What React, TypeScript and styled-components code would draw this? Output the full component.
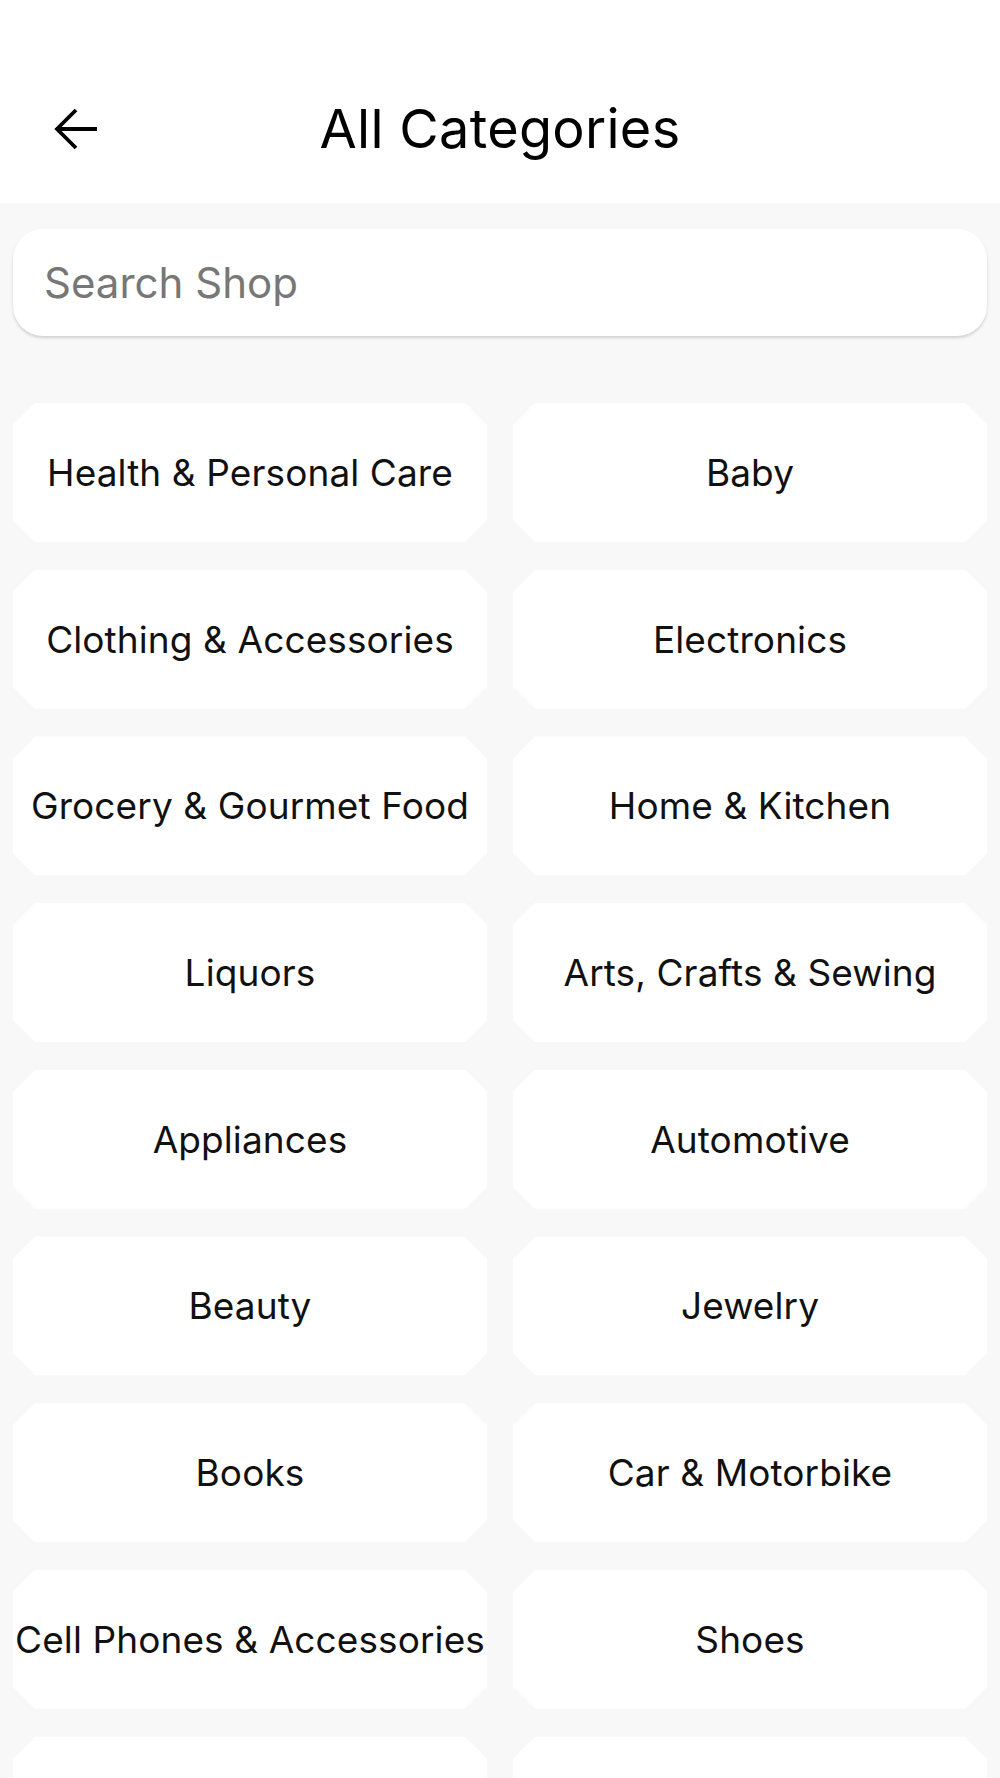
import React from "react";
import styled, { createGlobalStyle } from "styled-components";

const GlobalStyle = createGlobalStyle`
    * {
        box-sizing: border-box;
    }
    body {
        margin: 0;
        background-color: #f8f8f8;
        font-family: Inter, "Noto Sans", "Liberation Sans", sans-serif;
        color: #111;
    }
`;

const Page = styled.div`
    display: flex;
    flex-direction: column;
    height: 1778px;
    overflow: hidden;
    background-color: #f8f8f8;
`;

const Header = styled.header`
    display: grid;
    grid-template-columns: 1fr auto 1fr;
    align-items: center;
    height: 203px;
    flex-shrink: 0;
    padding: 54px 0 0 54px;
    background-color: #fff;
`;

const BackButton = styled.button`
    display: flex;
    align-items: center;
    justify-content: flex-start;
    justify-self: start;
    width: 44px;
    height: 44px;
    padding: 0;
    border: none;
    background: none;
    color: #000;
    cursor: pointer;
`;

const Title = styled.h1`
    margin: 0;
    margin-left: -54px;
    font-size: 54px;
    font-weight: 400;
    color: #000;
    letter-spacing: 0.3px;
`;

const Content = styled.main`
    display: flex;
    flex-direction: column;
    padding: 26px 13px 0;
    gap: 67px;
`;

const SearchBox = styled.div`
    display: flex;
    align-items: center;
    height: 107px;
    padding: 0 26px 0 29px;
    background-color: #fff;
    border-radius: 30px;
    box-shadow: 0 2px 3px rgba(0, 0, 0, 0.16);
`;

const SearchInput = styled.input`
    flex: 1;
    border: none;
    outline: none;
    background: transparent;
    font-family: inherit;
    font-size: 42px;
    color: #111;

    &::placeholder {
        color: #777;
    }
`;

const Grid = styled.div`
    display: grid;
    grid-template-columns: 1fr 1fr;
    grid-auto-rows: 139px;
    column-gap: 26px;
    row-gap: 27.7px;
`;

const Card = styled.button<{ bevel?: number }>`
    display: flex;
    align-items: center;
    justify-content: center;
    padding: 0;
    border: none;
    background-color: #fff;
    font-family: inherit;
    font-size: 37px;
    font-weight: 400;
    color: #111;
    letter-spacing: 0.1px;
    white-space: nowrap;
    cursor: pointer;
    clip-path: ${({ bevel = 22 }) => `polygon(
        ${bevel}px 0, calc(100% - ${bevel}px) 0, 100% ${bevel}px,
        100% calc(100% - ${bevel}px), calc(100% - ${bevel}px) 100%,
        ${bevel}px 100%, 0 calc(100% - ${bevel}px), 0 ${bevel}px
    )`};
`;

const categories = [
    "Health & Personal Care",
    "Baby",
    "Clothing & Accessories",
    "Electronics",
    "Grocery & Gourmet Food",
    "Home & Kitchen",
    "Liquors",
    "Arts, Crafts & Sewing",
    "Appliances",
    "Automotive",
    "Beauty",
    "Jewelry",
    "Books",
    "Car & Motorbike",
    "Cell Phones & Accessories",
    "Shoes",
    "",
    ""
];

const BackArrow = () => (
    <svg
        width="44"
        height="42"
        viewBox="0 0 44 42"
        fill="none"
        stroke="currentColor"
        strokeWidth="3.8"
    >
        <path d="M43 21H4" />
        <path d="M22 2L3 21L22 40" strokeLinejoin="miter" />
    </svg>
);

export default function App() {
    return (
        <>
            <GlobalStyle />
            <Page>
                <Header>
                    <BackButton aria-label="Back">
                        <BackArrow />
                    </BackButton>
                    <Title>All Categories</Title>
                    <span />
                </Header>
                <Content>
                    <SearchBox>
                        <SearchInput placeholder="Search Shop" />
                    </SearchBox>
                    <Grid>
                        {categories.map((name, i) => (
                            <Card key={i}>{name}</Card>
                        ))}
                    </Grid>
                </Content>
            </Page>
        </>
    );
}
